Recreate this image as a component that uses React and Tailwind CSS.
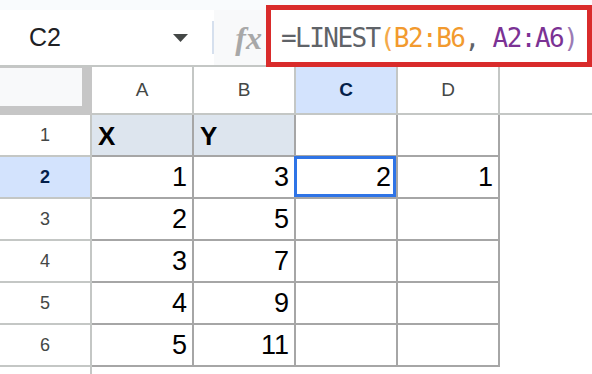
export default function App() {
  const cols = ["A", "B", "C", "D"];
  const data = [
    ["X", "Y", "", ""],
    ["1", "3", "2", "1"],
    ["2", "5", "", ""],
    ["3", "7", "", ""],
    ["4", "9", "", ""],
    ["5", "11", "", ""],
  ];
  return (
    <div className="w-[592px] h-[374px] overflow-hidden bg-white font-['Liberation_Sans',Arial,sans-serif] text-[#202124]">
      <div className="h-[10px] bg-[#f9fbfd]" />
      <div className="flex h-[57px] border-b-2 border-[#c4c7c5]">
        <div className="w-[212px] bg-white flex items-center justify-between pl-[29px] pr-[24px]">
          <span className="text-[25px] leading-none">C2</span>
          <svg width="15" height="8" viewBox="0 0 15 8">
            <path d="M0 0H15L7.5 8Z" fill="#444746" />
          </svg>
        </div>
        <div className="w-[2px] bg-white flex items-center">
          <div className="w-[2px] h-[33px] bg-[#d6e0ee]" />
        </div>
        <div className="w-[52px] bg-[#f8f9fa] flex items-center justify-end pr-[4px]">
          <span className="font-['Liberation_Serif',serif] italic font-bold text-[32px] leading-none text-[#a8a8a8]">
            fx
          </span>
        </div>
        <div className="relative flex-1 bg-white flex items-center pl-[15px]">
          <span className="font-['DejaVu_Sans_Mono',monospace] text-[26px] leading-none tracking-[-1.55px] whitespace-pre text-[#5f6368]">
            =LINEST<span className="text-[#f4a94a]">(</span>
            <span className="text-[#f29a2e]">B2:B6</span>,{" "}
            <span className="text-[#7b3294]">A2:A6</span>
            <span className="text-[#9b7bb5]">)</span>
          </span>
          <div className="absolute -top-[5px] left-0 right-0 -bottom-[2px] border-[5px] border-[#d92b2b]" />
        </div>
      </div>

      <div className="grid grid-cols-[92px_102px_102px_102px_102px_1fr] grid-rows-[48px_repeat(6,42px)_1fr] h-[307px]">
        <div className="bg-[#c6c6c6] pt-[1px]">
          <div className="w-[82px] h-[38px] bg-[#f8f9fa]" />
        </div>
        {cols.map((c) => (
          <div
            key={c}
            className={
              c === "C"
                ? "flex items-center justify-center border-r-2 border-b-2 border-[#c4c7c5] bg-[#d3e3fd] text-[19px] font-bold text-[#041e49]"
                : "flex items-center justify-center border-r-2 border-b-2 border-[#c4c7c5] bg-white text-[19px] text-[#444746]"
            }
          >
            {c}
          </div>
        ))}
        <div className="border-b-2 border-[#c4c7c5]" />

        {data.map((row, ri) => (
          <Row key={ri} index={ri + 1} row={row} />
        ))}

        <div className="border-r-2 border-[#c4c7c5]" />
        <div className="col-span-5" />
      </div>
    </div>
  );
}

function Row({ index, row }) {
  const selectedRow = index === 2;
  return (
    <>
      <div
        className={
          selectedRow
            ? "flex items-center justify-center border-r-2 border-b-2 border-[#c4c7c5] bg-[#d3e3fd] text-[18px] font-bold text-[#041e49]"
            : "flex items-center justify-center border-r-2 border-b-2 border-[#c4c7c5] bg-white text-[18px] text-[#444746]"
        }
      >
        {index}
      </div>
      {row.map((v, ci) => {
        const header = index === 1 && ci < 2;
        const selected = index === 2 && ci === 2;
        return (
          <div
            key={ci}
            className={
              header
                ? "relative flex items-end justify-start pl-[6px] pb-[6px] border-r-2 border-b-2 border-[#a6a6a6] bg-[#dde5ee] text-[26px] font-bold leading-none text-black"
                : "relative flex items-end justify-end pr-[5px] pb-[6px] border-r-2 border-b-2 border-[#a6a6a6] bg-white text-[27px] leading-none text-black"
            }
          >
            {v}
            {selected && (
              <div className="absolute -left-[2px] -top-[1px] right-0 bottom-0 border-[3px] border-[#2f74e6]" />
            )}
          </div>
        );
      })}
      <div />
    </>
  );
}
